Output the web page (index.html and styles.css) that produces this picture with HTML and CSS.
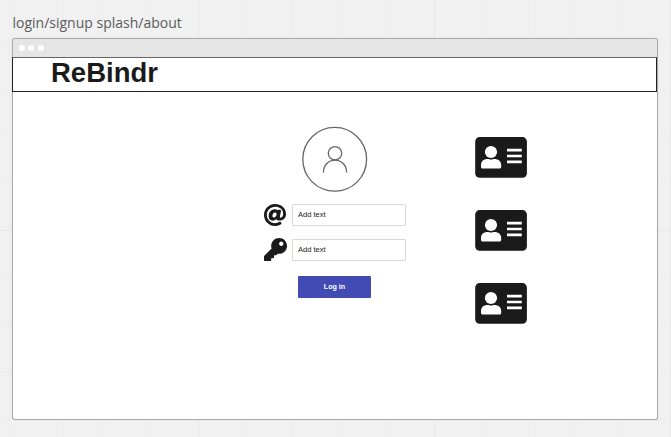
FILE: index.html
```html
<!DOCTYPE html>
<html lang="en">
<head>
<meta charset="utf-8">
<title>login/signup splash/about</title>
<link rel="stylesheet" href="styles.css">
</head>
<body>
<svg class="symbols" aria-hidden="true">
  <symbol id="card" viewBox="0 0 52 41">
    <rect x=".2" y=".1" width="51.700" height="40.600" rx="4.500" fill="#1a1a1a"/>
    <circle cx="16" cy="15" r="6.100" fill="#fff"/>
    <path d="M6 30v-2c0-4 3-6 6.500-6 1.500 0 2 .6 3.500.6s2-.6 3.500-.6c3.500 0 6.700 2 6.700 6v2q0 1.600-1.600 1.600H7.600Q6 31.600 6 30z" fill="#fff"/>
    <path d="M32 13.200h14.800M32 19h14.800M32 24.800h14.800" stroke="#fff" stroke-width="2.700"/>
  </symbol>
</svg>
<h2 class="frame-title">login/signup splash/about</h2>
<div class="window">
  <div class="titlebar"><i></i><i></i><i></i></div>
  <header class="header">ReBindr</header>
  <main class="content">
    <form class="login">
      <svg class="avatar" viewBox="0 0 66 66" fill="none" stroke="#666" stroke-width="1.300">
        <circle cx="32.700" cy="33.300" r="31.900"/>
        <circle cx="33" cy="27.300" r="6.700"/>
        <path d="M21.500 46.500v-.8a11.500 11.500 0 0 1 23 0v.8"/>
      </svg>
      <div class="field">
        <svg class="icon" viewBox="8 8 496 496"><path d="M256 8C118.941 8 8 118.919 8 256c0 137.059 110.919 248 248 248 48.154 0 95.342-14.140 135.408-40.223 12.005-7.815 14.625-24.288 5.552-35.372l-10.177-12.433c-7.671-9.371-21.179-11.667-31.373-5.129C325.920 429.757 291.314 440 256 440c-101.458 0-184-82.542-184-184S154.542 72 256 72c100.139 0 184 57.619 184 160 0 38.786-21.093 79.742-58.170 83.693-17.349-.454-16.910-12.857-13.476-30.024l23.433-121.110C394.653 149.750 383.308 136 368.225 136h-44.981a13.518 13.518 0 0 0-13.432 11.993l-.010.092c-14.697-17.901-40.448-21.775-59.971-21.775-74.580 0-137.831 62.234-137.831 151.460 0 65.303 36.785 105.870 96 105.870 26.984 0 57.369-15.637 74.991-38.333 9.522 34.104 40.613 34.103 70.710 34.103C462.609 379.410 504 307.798 504 232 504 95.653 394.023 8 256 8zm-21.680 304.430c-22.249 0-36.070-15.623-36.070-40.771 0-44.993 30.779-72.729 58.630-72.729 22.292 0 35.601 15.241 35.601 40.770 0 45.061-33.875 72.730-58.161 72.730z"/></svg>
        <div class="input">Add text</div>
      </div>
      <div class="field">
        <svg class="icon key" viewBox="0 0 512 512"><path d="M512 176.001C512 273.203 433.202 352 336 352c-11.220 0-22.190-1.062-32.827-3.069l-24.012 27.014A23.999 23.999 0 0 1 261.223 384H224v40c0 13.255-10.745 24-24 24h-40v40c0 13.255-10.745 24-24 24H24c-13.255 0-24-10.745-24-24v-78.059c0-6.365 2.529-12.470 7.029-16.971l161.802-161.802C163.108 213.814 160 195.271 160 176 160 78.798 238.797.001 335.999 0 433.488-.001 512 78.511 512 176.001zM336 128c0 26.510 21.490 48 48 48s48-21.490 48-48-21.490-48-48-48-48 21.490-48 48z"/></svg>
        <div class="input">Add text</div>
      </div>
      <button class="submit" type="button">Log in</button>
    </form>
    <aside class="cards">
      <svg><use href="#card"/></svg>
      <svg><use href="#card"/></svg>
      <svg><use href="#card"/></svg>
    </aside>
  </main>
</div>
</body>
</html>
```
FILE: styles.css
```css
* { box-sizing: border-box; }

body {
  margin: 0;
  height: 437px;
  padding: 13px 12px 0;
  overflow: hidden;
  font-family: "Liberation Sans", Arial, sans-serif;
  color: #1a1a1a;
  background-color: #f1f1f1;
  background-image:
    linear-gradient(90deg, #e7e7e7 1px, transparent 1px),
    linear-gradient(#e7e7e7 1px, transparent 1px),
    linear-gradient(90deg, #ededed 1px, transparent 1px),
    linear-gradient(#ededed 1px, transparent 1px);
  background-size: 236px 100%, 100% 236px, 47.200px 100%, 100% 47.200px;
  background-position: 198px 0, 0 230px, 9px 0, 0 41px;
}

.symbols { display: none; }

.frame-title {
  margin: 0;
  height: 25px;
  padding-left: 0.500px;
  font: 400 14px/20px "Open Sans", sans-serif;
  color: #5c5c5c;
}

.window {
  width: 646px;
  height: 382px;
  border: 1px solid #aaa;
  border-radius: 3px;
  background: #fff;
  box-shadow: 0 0 1px #aaa;
}

.titlebar {
  display: flex;
  align-items: center;
  gap: 3.500px;
  height: 18px;
  padding-left: 5.700px;
  background: #e5e5e5;
  border-radius: 2px 2px 0 0;
}
.titlebar i {
  width: 6px;
  height: 6px;
  border-radius: 50%;
  background: #fff;
}

.header {
  height: 35px;
  margin: 0 0 0 -1px;
  padding-left: 38px;
  border: 1px solid #222;
  border-top-color: #666;
  font-size: 27.500px;
  font-weight: 700;
  line-height: 30px;
}

.content {
  display: flex;
  padding: 34px 0 0 250px;
}

.login {
  display: flex;
  flex-direction: column;
  width: 143px;
}
.avatar {
  width: 66px;
  height: 66px;
  margin: 0 0 12px 39px;
}
.field {
  display: flex;
  align-items: center;
  justify-content: space-between;
  height: 22px;
  margin-bottom: 12.500px;
}
.icon {
  width: 22px;
  height: 22px;
  margin-left: 1px;
  fill: #1a1a1a;
}
.key {
  width: 23px;
  height: 23px;
  margin-left: 0.500px;
}
.input {
  width: 114px;
  height: 22px;
  padding-left: 5px;
  border: 1px solid #d8d8d8;
  border-radius: 1px;
  font-size: 7.500px;
  line-height: 20px;
}
.submit {
  width: 73px;
  height: 22px;
  margin: 3px 0 0 35px;
  padding: 0;
  border: 0;
  border-radius: 1px;
  background: #424bb3;
  color: #fff;
  font: 700 7.100px/21px "Liberation Sans", Arial, sans-serif;
}

.cards {
  display: flex;
  flex-direction: column;
  gap: 32.300px;
  margin: 10.500px 0 0 69px;
}
.cards svg {
  width: 52px;
  height: 41px;
}
```
